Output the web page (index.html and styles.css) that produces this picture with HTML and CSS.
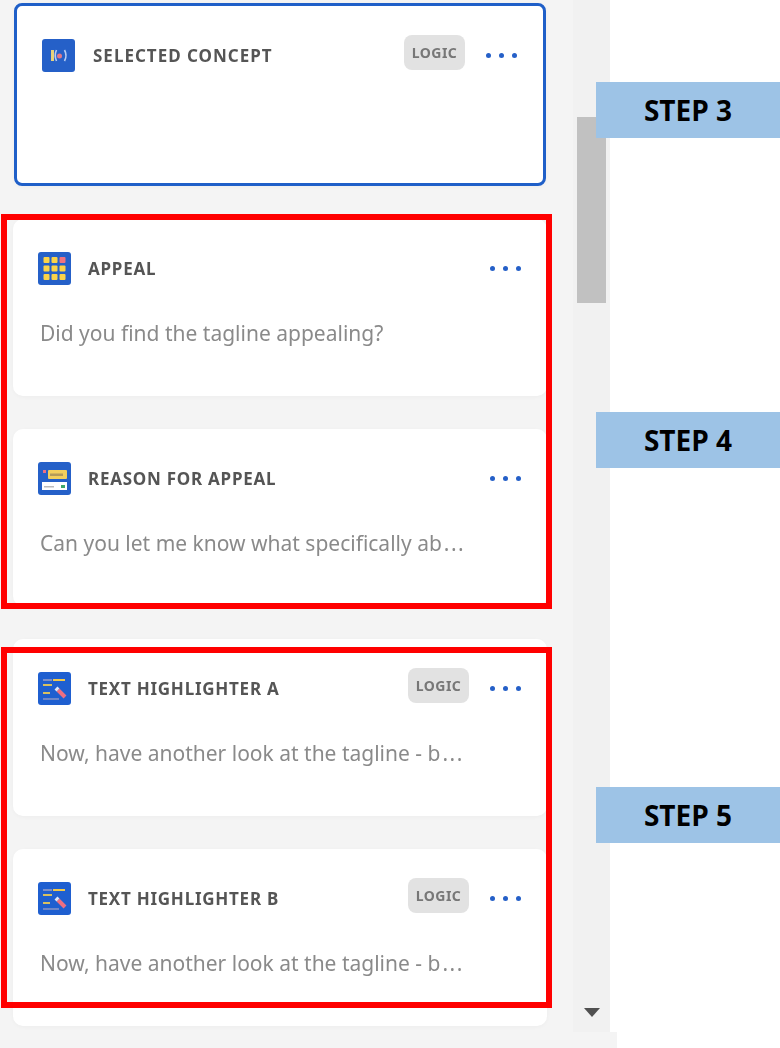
FILE: index.html
```html
<!DOCTYPE html>
<html lang="en">
<head>
<meta charset="utf-8">
<title>Survey flow</title>
<link rel="stylesheet" href="styles.css">
</head>
<body>
<div class="page">
  <div class="panel">
    <div class="list">
      <section class="card card-selected">
        <div class="head">
          <svg class="icon" viewBox="0 0 33 33"><rect width="33" height="33" rx="3" fill="#2560c8"/><path d="M10.500 11v11" stroke="#e8d27a" stroke-width="3" fill="none"/><circle cx="17.500" cy="17" r="2.500" fill="#e27a8a"/><path d="M22.500 11q3 5.500 0 11M14.500 11q-2.500 5.500 0 11" stroke="#b9cdf2" stroke-width="1.600" fill="none"/></svg>
          <h2 class="title">SELECTED CONCEPT</h2>
          <span class="badge">LOGIC</span>
          <span class="dots"><i></i><i></i><i></i></span>
        </div>
      </section>

      <section class="card">
        <div class="head">
          <svg class="icon" viewBox="0 0 33 33"><rect width="33" height="33" rx="3" fill="#2560c8"/><g fill="#fbd348"><rect x="5.500" y="5" width="6" height="6" rx="1"/><rect x="13.500" y="5" width="6" height="6" rx="1"/><rect x="5.500" y="13.500" width="6" height="6" rx="1"/><rect x="13.500" y="13.500" width="6" height="6" rx="1"/><rect x="21.500" y="13.500" width="6" height="6" rx="1"/><rect x="5.500" y="22" width="6" height="6" rx="1"/><rect x="13.500" y="22" width="6" height="6" rx="1"/><rect x="21.500" y="22" width="6" height="6" rx="1"/></g><rect x="21.500" y="5" width="6" height="6" rx="1" fill="#f0737f"/></svg>
          <h2 class="title">APPEAL</h2>
          <span class="dots"><i></i><i></i><i></i></span>
        </div>
        <p class="desc">Did you find the tagline appealing?</p>
      </section>

      <section class="card">
        <div class="head">
          <svg class="icon" viewBox="0 0 33 33"><rect width="33" height="33" rx="3" fill="#2560c8"/><rect x="10" y="8" width="19" height="9" rx="1" fill="#f3cf5e"/><rect x="12" y="11.500" width="13" height="2.500" fill="#b49a5a"/><rect x="5" y="8" width="3" height="3" fill="#ee6f82"/><rect x="4" y="20" width="25" height="8" fill="#fff"/><rect x="6" y="24" width="10" height="1.500" fill="#bbb"/><rect x="23" y="23" width="4" height="3" fill="#3fa86a"/></svg>
          <h2 class="title">REASON FOR APPEAL</h2>
          <span class="dots"><i></i><i></i><i></i></span>
        </div>
        <p class="desc">Can you let me know what specifically ab<span class="more">...</span></p>
      </section>

      <section class="card">
        <div class="head">
          <svg class="icon" viewBox="0 0 33 33"><rect width="33" height="33" rx="3" fill="#1f5fd0"/><g fill="none" stroke-width="2"><path d="M5 8h9" stroke="#7d8fc8"/><path d="M15 8h12" stroke="#f2c94c"/><path d="M5 13h9" stroke="#d9c060"/><path d="M5 21h7" stroke="#d9c060"/><path d="M5 27h16" stroke="#6f86c8"/></g><path d="M20 18l7 7" stroke="#ee6f82" stroke-width="4"/><path d="M18 16l2 2" stroke="#dfe6f5" stroke-width="4"/></svg>
          <h2 class="title">TEXT HIGHLIGHTER A</h2>
          <span class="badge">LOGIC</span>
          <span class="dots"><i></i><i></i><i></i></span>
        </div>
        <p class="desc">Now, have another look at the tagline - b<span class="more">...</span></p>
      </section>

      <section class="card">
        <div class="head">
          <svg class="icon" viewBox="0 0 33 33"><rect width="33" height="33" rx="3" fill="#1f5fd0"/><g fill="none" stroke-width="2"><path d="M5 8h9" stroke="#7d8fc8"/><path d="M15 8h12" stroke="#f2c94c"/><path d="M5 13h9" stroke="#d9c060"/><path d="M5 21h7" stroke="#d9c060"/><path d="M5 27h16" stroke="#6f86c8"/></g><path d="M20 18l7 7" stroke="#ee6f82" stroke-width="4"/><path d="M18 16l2 2" stroke="#dfe6f5" stroke-width="4"/></svg>
          <h2 class="title">TEXT HIGHLIGHTER B</h2>
          <span class="badge">LOGIC</span>
          <span class="dots"><i></i><i></i><i></i></span>
        </div>
        <p class="desc">Now, have another look at the tagline - b<span class="more">...</span></p>
      </section>
    </div>
    <div class="scrollbar">
      <div class="thumb"></div>
      <div class="arrow"></div>
    </div>
  </div>
  <div class="band"></div>

  <div class="frame frame-a"></div>
  <div class="frame frame-b"></div>
  <div class="step step-3">STEP 3</div>
  <div class="step step-4">STEP 4</div>
  <div class="step step-5">STEP 5</div>
</div>
</body>
</html>
```

FILE: styles.css
```css
* { box-sizing: border-box; }
html, body { margin: 0; padding: 0; background: #fff; }
body { width: 780px; height: 1048px; overflow: hidden; font-family: "Noto Sans", "Open Sans", sans-serif; }
.page { position: relative; width: 780px; height: 1048px; }
.panel { display: flex; width: 610px; height: 1032px; background: #f4f4f4; }
.band { width: 617px; height: 16px; background: #f4f4f4; }
.list { width: 573px; height: 1032px; padding: 3px 26px 0 13px; display: flex; flex-direction: column; gap: 33px; overflow: hidden; filter: blur(0.4px); }
.card { flex: none; height: 177px; padding: 33px 26px 0 25px; background: #fff; border-radius: 10px; box-shadow: 0 1px 4px rgba(0, 0, 0, 0.03); }
.card-selected { height: 183px; margin: 0 1px; border: 3px solid #1f5fc8; border-radius: 8px; }
.head { display: flex; align-items: center; height: 33px; }
.icon { flex: none; width: 33px; height: 33px; }
.title { flex: 1; margin: 0 0 0 17px; font-size: 17px; line-height: 22px; font-weight: 700; letter-spacing: 0.75px; color: #555; white-space: nowrap; }
.card-selected .title { margin-left: 18px; letter-spacing: 1px; }
.badge { flex: none; display: flex; align-items: center; justify-content: center; width: 61px; height: 35px; margin: 0 21px 7px 0; background: #e2e2e2; border-radius: 8px; font-size: 14px; font-weight: 700; letter-spacing: 0.5px; color: #777; }
.dots { flex: none; display: flex; justify-content: space-between; width: 31px; }
.dots i { width: 5px; height: 5px; border-radius: 50%; background: #2560c8; }
.desc { margin: 34px 0 0 2px; font-size: 21px; line-height: 28px; color: #8a8a8a; white-space: nowrap; }
.more { margin-left: 2px; letter-spacing: 1.5px; }
.scrollbar { position: relative; width: 37px; background: #f1f1f1; }
.thumb { position: absolute; left: 4px; top: 117px; width: 29px; height: 186px; background: #c1c1c1; }
.arrow { position: absolute; left: 11px; top: 1008px; border-style: solid; border-width: 9px 8px 0; border-color: #505050 transparent transparent; }
.frame { position: absolute; left: 1px; width: 551px; border: 6px solid #f00; }
.frame-a { top: 214px; height: 395px; }
.frame-b { top: 647px; height: 361px; }
.step { position: absolute; left: 596px; width: 184px; height: 56px; display: flex; align-items: center; justify-content: center; background: #9dc3e6; font-family: "Open Sans", sans-serif; font-size: 28px; font-weight: 700; color: #000; }
.step-3 { top: 82px; }
.step-4 { top: 412px; }
.step-5 { top: 787px; }
```
